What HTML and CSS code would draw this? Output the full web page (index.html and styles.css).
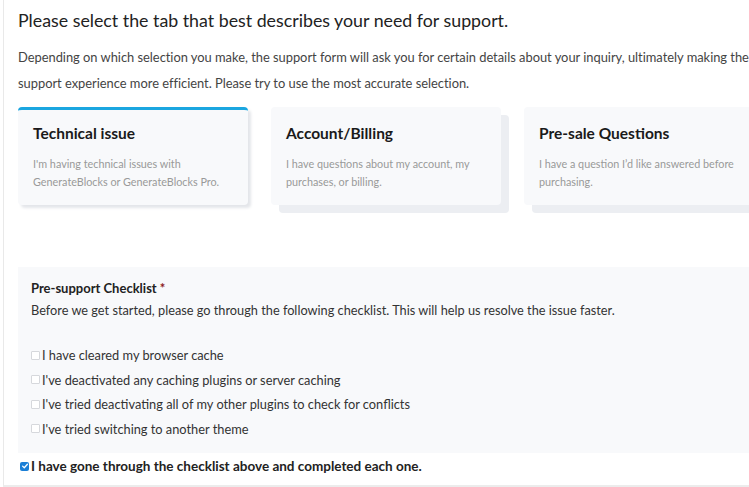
FILE: index.html
```html
<!DOCTYPE html>
<html lang="en">
<head>
<meta charset="utf-8">
<link rel="stylesheet" href="styles.css">
</head>
<body>
<div class="frame">
  <h2 class="title">Please select the tab that best describes your need for support.</h2>
  <p class="intro">Depending on which selection you make, the support form will ask you for certain details about your inquiry, ultimately making the support experience more efficient. Please try to use the most accurate selection.</p>

  <div class="tabs">
    <div class="tab active">
      <h3>Technical issue</h3>
      <p>I'm having technical issues with GenerateBlocks or GenerateBlocks Pro.</p>
    </div>
    <div class="tab">
      <h3>Account/Billing</h3>
      <p>I have questions about my account, my purchases, or billing.</p>
    </div>
    <div class="tab">
      <h3>Pre-sale Questions</h3>
      <p>I have a question I’d like answered before purchasing.</p>
    </div>
  </div>

  <div class="checklist">
    <div class="cl-label">Pre-support Checklist <span class="req">*</span></div>
    <div class="cl-desc">Before we get started, please go through the following checklist. This will help us resolve the issue faster.</div>
    <ul class="cl-items">
      <li><span class="box"></span>I have cleared my browser cache</li>
      <li><span class="box"></span>I've deactivated any caching plugins or server caching</li>
      <li><span class="box"></span>I've tried deactivating all of my other plugins to check for conflicts</li>
      <li><span class="box"></span>I've tried switching to another theme</li>
    </ul>
  </div>

  <div class="confirm"><span class="cbox"><svg viewBox="0 0 10 10" width="8" height="8"><path d="M2 5.2 L4.1 7.2 L8 2.8" fill="none" stroke="#fff" stroke-width="1.6" stroke-linecap="round" stroke-linejoin="round"/></svg></span>I have gone through the checklist above and completed each one.</div>
</div>
</body>
</html>
```

FILE: styles.css
```css
html, body {
  margin: 0;
  padding: 0;
  background: #fff;
}
body {
  font-family: Lato, "Noto Sans", sans-serif;
  color: #333;
  overflow: hidden;
}
.frame {
  margin-left: 3px;
  border-left: 1px solid #e9e9e9;
  border-bottom: 2px solid #ececec;
  padding: 8px 0 12px 14px;
  box-sizing: border-box;
  height: 487px;
}
.title {
  margin: 0;
  font-size: 17.8px;
  font-weight: 400;
  color: #222;
  line-height: 24px;
}
.intro {
  margin: 12px 0 0;
  font-size: 12.9px;
  letter-spacing: -0.02px;
  line-height: 26px;
  color: #444;
}
.tabs {
  display: flex;
  gap: 23px;
  margin-top: 11px;
}
.tab {
  flex: 0 0 230px;
  box-sizing: border-box;
  height: 98px;
  background: #f8f9fb;
  border-radius: 4px;
  padding: 15px 14px 0 15px;
  box-shadow: 8px 8px 0 #eceef2;
}
.tab.active {
  border-top: 3px solid #1ba6e0;
  padding-top: 12px;
  box-shadow: 3px 3px 3px #e4e6ea;
}
.tab h3 {
  margin: 0;
  font-size: 15.5px;
  font-weight: 700;
  color: #1a1a1a;
  line-height: 22px;
}
.tab p {
  margin: 11px 0 0;
  font-size: 10.8px;
  line-height: 18px;
  color: #999;
}
.checklist {
  margin-top: 62px;
  background: #f8f9fb;
  padding: 12px 13px 14px;
  height: 186px;
  box-sizing: border-box;
}
.cl-label {
  font-size: 13px;
  font-weight: 700;
  color: #222;
  line-height: 18px;
}
.req {
  color: #8b1a1a;
}
.cl-desc {
  font-size: 12.75px;
  color: #333;
  line-height: 22px;
  margin-top: 2px;
}
.cl-items {
  list-style: none;
  margin: 22px 0 0;
  padding: 0;
}
.cl-items li {
  display: flex;
  align-items: center;
  font-size: 12.8px;
  color: #333;
  line-height: 24.5px;
}
.box {
  width: 7px;
  height: 7px;
  border: 1px solid #d6d8dc;
  border-radius: 1px;
  background: #fff;
  margin-right: 2px;
}
.confirm {
  display: flex;
  align-items: center;
  margin-top: 3px;
  font-size: 13.5px;
  font-weight: 700;
  color: #222;
  line-height: 20px;
  padding-left: 2px;
}
.cbox {
  width: 9px;
  height: 9px;
  border-radius: 2px;
  background: #1b7fd6;
  margin-right: 2px;
  display: inline-flex;
  align-items: center;
  justify-content: center;
}
```
